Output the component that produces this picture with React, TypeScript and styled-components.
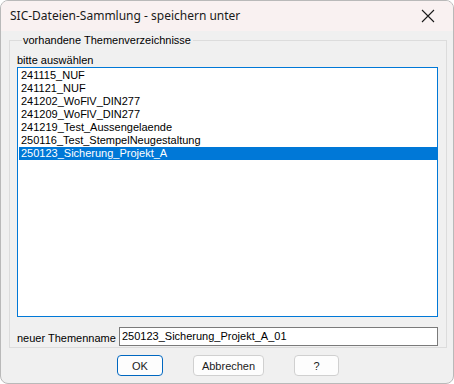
import React, { useState } from 'react';
import styled, { createGlobalStyle } from 'styled-components';

const GlobalStyle = createGlobalStyle`
  html, body {
    margin: 0;
    padding: 0;
    background: #ffffff;
  }
  * {
    box-sizing: border-box;
  }
`

const Window = styled.div`
  width: 454px;
  height: 384px;
  display: flex;
  flex-direction: column;
  background: #f0f0f0;
  border: 1px solid #b9b9b9;
  border-radius: 8px;
  overflow: hidden;
  font-family: "Liberation Sans", Arial, sans-serif;
  font-size: 11px;
  color: #000000;
`

const TitleBar = styled.div`
  height: 30px;
  flex-shrink: 0;
  display: flex;
  align-items: center;
  justify-content: space-between;
  background: #f9f1f1;
  padding-left: 9px;
`

const Title = styled.span`
  font-family: "Noto Sans", "Open Sans", sans-serif;
  font-size: 12px;
  color: #1a1a1a;
  margin-top: -1px;
`

const CloseButton = styled.div`
  width: 46px;
  height: 30px;
  display: flex;
  align-items: center;
  justify-content: center;
  margin-right: 2px;
`

const Body = styled.div`
  flex: 1;
  display: flex;
  flex-direction: column;
  padding: 2px 6px 0 8px;
`

const Group = styled.fieldset`
  margin: 0;
  padding: 6px 8px 1px 7px;
  border: 1px solid #dcdcdc;
  border-radius: 0;
  display: flex;
  flex-direction: column;
`

const Legend = styled.legend`
  padding: 0 2px 0 1px;
  margin-left: 5px;
  line-height: 14px;
  color: #000000;
`

const Caption = styled.div`
  line-height: 13px;
  height: 13px;
  margin-top: 1px;
`

const ListBox = styled.div`
  height: 250px;
  background: #ffffff;
  border: 1px solid #0078d7;
  padding: 1px 0 0 1px;
  overflow: hidden;
`

const ListItem = styled.div<{ $selected?: boolean }>`
  height: 13px;
  line-height: 13px;
  padding-left: 2px;
  white-space: nowrap;
  background: ${(props) => (props.$selected ? '#0078d7' : 'transparent')};
  color: ${(props) => (props.$selected ? '#ffffff' : '#000000')};
`

const NameRow = styled.div`
  display: flex;
  align-items: center;
  margin-top: 10px;
`

const NameLabel = styled.span`
  width: 102px;
  flex-shrink: 0;
  white-space: nowrap;
  padding-top: 2px;
`

const NameInput = styled.div`
  flex: 1;
  height: 19px;
  line-height: 17px;
  background: #ffffff;
  border: 1px solid #7a7a7a;
  padding-left: 2px;
  white-space: nowrap;
`

const ButtonRow = styled.div`
  display: flex;
  justify-content: center;
  gap: 30px;
  margin-top: 7px;
`

const Button = styled.div<{ $width: number; $default?: boolean }>`
  width: ${(props) => props.$width}px;
  height: 21px;
  display: flex;
  align-items: center;
  justify-content: center;
  background: #fdfdfd;
  border: 1px solid ${(props) => (props.$default ? '#0067c0' : '#d0d0d0')};
  border-radius: 4px;
  color: #1b1b1b;
`

const themes = [
  '241115_NUF',
  '241121_NUF',
  '241202_WoFlV_DIN277',
  '241209_WoFlV_DIN277',
  '241219_Test_Aussengelaende',
  '250116_Test_StempelNeugestaltung',
  '250123_Sicherung_Projekt_A',
];

const App = () => {
  const [selected, setSelected] = useState(6);

  return (
    <>
      <GlobalStyle />
      <Window>
        <TitleBar>
          <Title>SIC-Dateien-Sammlung - speichern unter</Title>
          <CloseButton>
            <svg width="14" height="14" viewBox="0 0 14 14">
              <path d="M1 1 L13 13 M13 1 L1 13" stroke="#1a1a1a" strokeWidth="1.1" fill="none" />
            </svg>
          </CloseButton>
        </TitleBar>
        <Body>
          <Group>
            <Legend>vorhandene Themenverzeichnisse</Legend>
            <Caption>bitte auswählen</Caption>
            <ListBox>
              {themes.map((theme, i) => (
                <ListItem key={theme} $selected={i === selected} onClick={() => setSelected(i)}>
                  {theme}
                </ListItem>
              ))}
            </ListBox>
            <NameRow>
              <NameLabel>neuer Themenname</NameLabel>
              <NameInput>250123_Sicherung_Projekt_A_01</NameInput>
            </NameRow>
          </Group>
          <ButtonRow>
            <Button $width={46} $default>OK</Button>
            <Button $width={71}>Abbrechen</Button>
            <Button $width={45}>?</Button>
          </ButtonRow>
        </Body>
      </Window>
    </>
  );
};

export default App;
